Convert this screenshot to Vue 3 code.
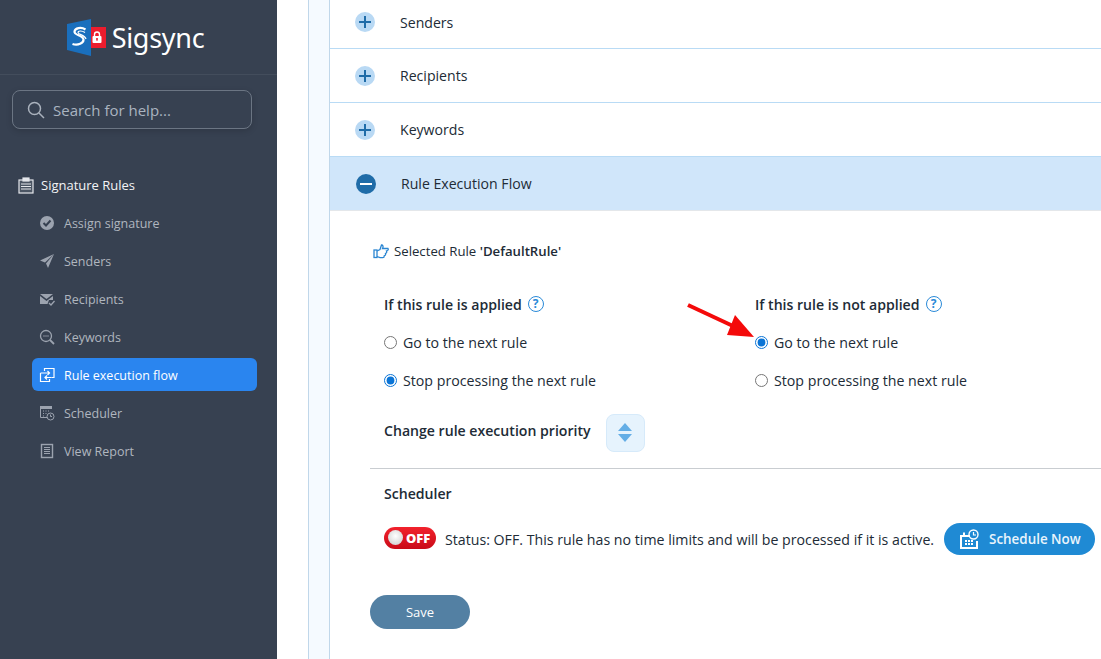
<script setup>
const menu = [
  { label: 'Assign signature', icon: 'check' },
  { label: 'Senders', icon: 'send' },
  { label: 'Recipients', icon: 'mail' },
  { label: 'Keywords', icon: 'search' },
  { label: 'Rule execution flow', icon: 'flow', active: true },
  { label: 'Scheduler', icon: 'sched' },
  { label: 'View Report', icon: 'report' }
];
const sections = ['Senders', 'Recipients', 'Keywords'];
</script>

<template>
  <div class="page">
    <aside class="sidebar">
      <div class="brand">
        <svg class="logo" width="40" height="37" viewBox="0 0 40 37">
          <rect x="24" y="8" width="15" height="21" fill="#ec1c2d" />
          <path d="M0 5 L24 0 V37 L0 31 Z" fill="#1a6fbd" />
          <path d="M18.5 10.5 C14 7.5 8 9 7.5 12.5 C7 16.5 16 16 16.5 20.5 C16.8 24 11 27 5.5 25" fill="none" stroke="#fff" stroke-width="2.2" />
          <path d="M18 13.5 C15 11.5 11 11.5 11 13.5 C11 15.5 18 16 19 20" fill="none" stroke="#fff" stroke-width="1.2" />
          <rect x="25.5" y="17" width="9" height="7" rx="1" fill="#fff" />
          <path d="M27.5 17 V15.5 A2.5 2.5 0 0 1 32.5 15.5 V17" fill="none" stroke="#fff" stroke-width="1.4" />
          <rect x="29.2" y="19" width="1.6" height="2.6" fill="#ec1c2d" />
        </svg>
        <span class="brand-name">Sigsync</span>
      </div>

      <div class="search">
        <svg width="18" height="18" viewBox="0 0 18 18" fill="none" stroke="#aab2bd" stroke-width="1.5">
          <circle cx="7.5" cy="7.5" r="6" />
          <path d="M12 12 L17 17" />
        </svg>
        <span>Search for help...</span>
      </div>

      <div class="nav-head">
        <svg width="16" height="17" viewBox="0 0 16 17" fill="none" stroke="#e5e7eb" stroke-width="1.2">
          <rect x="1" y="3" width="14" height="13" fill="#4b5563" />
          <rect x="5" y="1" width="6" height="3" fill="#e5e7eb" />
          <path d="M3 7 H13 M3 9.5 H13 M3 12 H13" />
        </svg>
        <span>Signature Rules</span>
      </div>

      <nav class="nav">
        <div v-for="item in menu" :key="item.label" class="nav-item" :class="{ active: item.active }">
          <svg class="nav-icon" width="16" height="16" viewBox="0 0 16 16">
            <g v-if="item.icon === 'check'">
              <circle cx="8" cy="8" r="7" fill="#9ca3af" />
              <path d="M4.5 8 L7 10.5 L11.5 5.5" fill="none" stroke="#374151" stroke-width="2" />
            </g>
            <path v-else-if="item.icon === 'send'" d="M15 1 L1 7.5 L6 9.5 Z M15 1 L7 10.5 L9 15 Z" fill="#9ca3af" />
            <g v-else-if="item.icon === 'mail'">
              <path d="M1 3 H14 L7.5 8 Z" fill="#9ca3af" />
              <path d="M1 5 L7.5 10 L14 5 V9 H10 L8.5 13 H1 Z" fill="#9ca3af" />
              <path d="M10 12 L12 14 L15.5 10" fill="none" stroke="#9ca3af" stroke-width="1.3" />
            </g>
            <g v-else-if="item.icon === 'search'" fill="none" stroke="#9ca3af" stroke-width="1.3">
              <circle cx="7" cy="7" r="5.5" />
              <path d="M11 11 L15 15" stroke-width="1.8" />
              <path d="M4.5 7 H5.5 M6.5 7 H7.5 M8.5 7 H9.5" />
            </g>
            <g v-else-if="item.icon === 'flow'" fill="none" stroke="#fff" stroke-width="1.2">
              <path d="M5.5 4 V1.5 H15 V10.5 H12.5" />
              <path d="M1.5 6 H4 M1.5 6 V14.5 H10.5 V12" />
              <path d="M4 6 H10.5 M8.5 4 L10.5 6 L8.5 8" />
              <path d="M12.5 10.5 H6 M8 8.5 L6 10.5 L8 12.5" />
            </g>
            <g v-else-if="item.icon === 'sched'">
              <rect x="1" y="1" width="12" height="3" fill="#9ca3af" />
              <path d="M1.5 3 V12.5 H8" fill="none" stroke="#9ca3af" />
              <path d="M4 6 H5 M6.5 6 H7.5 M9 6 H10 M4 8.5 H5 M6.5 8.5 H7.5 M4 11 H5" stroke="#9ca3af" />
              <circle cx="11.5" cy="11.5" r="3.5" fill="#374151" stroke="#9ca3af" />
              <path d="M11.5 9.5 V11.5 H13" fill="none" stroke="#9ca3af" />
            </g>
            <g v-else fill="none" stroke="#9ca3af">
              <rect x="2.5" y="1.5" width="11" height="13" stroke-width="1.4" />
              <path d="M5 4.5 H11 M5 6.5 H11 M5 8.5 H11 M5 10.5 H11" />
            </g>
          </svg>
          <span>{{ item.label }}</span>
        </div>
      </nav>
    </aside>

    <div class="gutter"></div>

    <main class="content">
      <div v-for="(s, i) in sections" :key="s" class="acc-row" :class="{ first: i === 0 }">
        <span class="plus"></span>
        <span class="acc-label">{{ s }}</span>
      </div>
      <div class="acc-row open">
        <span class="minus"></span>
        <span class="acc-label">Rule Execution Flow</span>
      </div>

      <div class="panel">
        <div class="selected">
          <svg width="16" height="15" viewBox="0 0 16 15" fill="none" stroke="#2b86d2" stroke-width="1.3">
            <rect x="1" y="6" width="3" height="7.5" />
            <path d="M4 7 L7 5.5 L8.5 1 C10 1 10.5 2.5 9.5 4.5 H15 C15.6 5.5 15 6.8 13.5 7 C14 8.2 13.5 9.2 12.5 9.5 C12.8 10.7 12.3 11.5 11.3 11.7 C11.3 13 10.8 13.7 9.8 13.7 H7 L4 12.5" />
          </svg>
          <span>Selected Rule <b>'DefaultRule'</b></span>
        </div>

        <div class="rule-cols">
          <div class="rule-col">
            <div class="rule-title">
              If this rule is applied
              <span class="help">?</span>
            </div>
            <label class="radio"><input type="radio" name="applied" /> Go to the next rule</label>
            <label class="radio"><input type="radio" name="applied" checked /> Stop processing the next rule</label>
          </div>
          <div class="rule-col">
            <div class="rule-title">
              If this rule is not applied
              <span class="help">?</span>
            </div>
            <label class="radio"><input type="radio" name="notapplied" checked /> Go to the next rule</label>
            <label class="radio"><input type="radio" name="notapplied" /> Stop processing the next rule</label>
          </div>
        </div>

        <div class="priority">
          <span class="rule-title flat">Change rule execution priority</span>
          <span class="sort-btn">
            <svg width="14" height="20" viewBox="0 0 14 20" fill="#64aee6">
              <path d="M7 0 L14 8 H0 Z" />
              <path d="M0 11 H14 L7 19 Z" />
            </svg>
          </span>
        </div>

        <div class="divider"></div>

        <div class="rule-title sched-title">Scheduler</div>
        <div class="status-row">
          <span class="toggle"><i></i>OFF</span>
          <span class="status-text">Status: OFF. This rule has no time limits and will be processed if it is active.</span>
          <button class="schedule-btn">
            <svg width="20" height="21" viewBox="0 0 20 21">
              <path d="M1 6 H11 V8 H3 V18 H17 V12 H19 V20 H1 Z" fill="#fff" />
              <rect x="4" y="3.5" width="2" height="4" fill="#fff" />
              <path d="M6 11 H8 V13 H6 Z M9 11 H11 V13 H9 Z M12 11 H14 V13 H12 Z M6 14 H8 V16 H6 Z M9 14 H11 V16 H9 Z M12 14 H14 V16 H12 Z" fill="#fff" />
              <circle cx="14.5" cy="5.5" r="4.5" fill="none" stroke="#fff" stroke-width="1.4" />
              <path d="M14.5 3 V6 H17" fill="none" stroke="#fff" stroke-width="1.2" />
            </svg>
            Schedule Now
          </button>
        </div>

        <button class="save-btn">Save</button>
      </div>

      <svg class="arrow" width="72" height="44" viewBox="0 0 72 44">
        <path d="M1 2 L46 23" stroke="#f40a0a" stroke-width="4" fill="none" />
        <path d="M67 34 L40 32 L48 12 Z" fill="#f40a0a" />
      </svg>
    </main>
  </div>
</template>

<style scoped>
.page {
  display: flex;
  width: 1101px;
  height: 659px;
  overflow: hidden;
  background: #fff;
  font-family: "Open Sans", "Noto Sans", "Liberation Sans", sans-serif;
  color: #212b36;
}

.sidebar {
  width: 277px;
  flex-shrink: 0;
  background: #374151;
}

.brand {
  height: 75px;
  border-bottom: 1px solid #434d5c;
  display: flex;
  align-items: center;
  justify-content: center;
  gap: 5px;
  padding-right: 6px;
  box-sizing: border-box;
}

.brand-name {
  font-size: 27px;
  color: #fff;
  letter-spacing: -0.3px;
  font-family: "Noto Sans", sans-serif;
}

.search {
  margin: 15px 25px 0 12px;
  height: 37px;
  border: 1px solid #6b7583;
  border-radius: 8px;
  display: flex;
  align-items: center;
  gap: 8px;
  padding-left: 14px;
  box-shadow: 0 2px 6px rgba(0, 0, 0, 0.15);
  color: #aab4c0;
  font-size: 15px;
}

.nav-head {
  margin: 46px 0 0 18px;
  display: flex;
  align-items: center;
  gap: 7px;
  color: #f3f4f6;
  font-size: 13px;
  height: 20px;
}

.nav {
  margin: 11px 20px 0 32px;
  display: flex;
  flex-direction: column;
  gap: 5px;
}

.nav-item {
  height: 33px;
  box-sizing: border-box;
  padding-top: 1px;
  border-radius: 6px;
  display: flex;
  align-items: center;
  gap: 9px;
  padding-left: 7px;
  font-size: 12.5px;
  color: #b0b6bf;
}

.nav-item.active {
  background: #2a85ef;
  color: #fff;
}

.nav-icon {
  flex-shrink: 0;
  overflow: visible;
}

.gutter {
  width: 20px;
  margin-left: 31px;
  flex-shrink: 0;
  background: #f5faff;
  border-left: 1px solid #c0d7ea;
  border-right: 1px solid #c0d7ea;
}

.content {
  flex: 1;
  min-width: 0;
  position: relative;
}

.acc-row {
  height: 53px;
  border-bottom: 1px solid #b9dbf5;
  display: flex;
  align-items: center;
  font-size: 14.1px;
  padding-left: 25px;
}

.acc-row.first {
  padding-bottom: 4px;
  box-sizing: content-box;
  height: 44px;
}

.acc-row.open {
  height: 53px;
  background: #d0e6fa;
  border-bottom: 1px solid #e4e7ea;
  padding-left: 26px;
}

.acc-label {
  margin-left: 25px;
}

.plus,
.minus {
  width: 20px;
  height: 20px;
  border-radius: 50%;
  flex-shrink: 0;
  position: relative;
  background: #b9d9f4;
}

.minus {
  background: #1f6ca8;
}

.plus::before,
.plus::after,
.minus::before {
  content: "";
  position: absolute;
  left: 4px;
  top: 9px;
  width: 12px;
  height: 2px;
  background: #1f6ca8;
}

.plus::after {
  transform: rotate(90deg);
}

.minus::before {
  background: #fff;
}

.panel {
  padding: 32px 0 0 40px;
}

.selected {
  display: flex;
  align-items: center;
  gap: 5px;
  margin-left: 3px;
  font-size: 13.2px;
  height: 16px;
}

.selected b {
  font-weight: 600;
}

.rule-cols {
  display: flex;
  margin: 35px 0 0 14px;
}

.rule-col {
  width: 371px;
  flex-shrink: 0;
}

.rule-title {
  font-size: 14.1px;
  font-weight: 600;
  height: 20px;
  display: flex;
  align-items: center;
  gap: 6px;
}

.rule-title.flat {
  display: block;
  margin-bottom: 4px;
  white-space: nowrap;
}

.help {
  width: 16px;
  height: 16px;
  box-sizing: border-box;
  border: 1.5px solid #2a8ad8;
  border-radius: 50%;
  color: #2a8ad8;
  font-size: 12px;
  font-weight: 700;
  line-height: 13px;
  text-align: center;
}

.radio {
  display: flex;
  align-items: center;
  gap: 6px;
  margin-top: 18px;
  height: 20px;
  font-size: 14.2px;
}

.radio input {
  width: 13px;
  height: 13px;
  margin: 0;
  accent-color: #0a74d6;
}

.priority {
  margin: 24px 0 0 14px;
  display: flex;
  align-items: center;
  gap: 15px;
}

.sort-btn {
  width: 39px;
  height: 38px;
  background: #e6f3fd;
  border: 1px solid #d6eafa;
  border-radius: 8px;
  box-sizing: border-box;
  display: flex;
  align-items: center;
  justify-content: center;
}

.divider {
  height: 1px;
  background: #c9cdd1;
  margin-top: 16px;
}

.sched-title {
  margin: 14px 0 0 14px;
}

.status-row {
  margin: 20px 0 0 14px;
  display: flex;
  align-items: center;
  height: 32px;
  white-space: nowrap;
}

.toggle {
  width: 52px;
  height: 22px;
  flex-shrink: 0;
  border-radius: 11px;
  background: linear-gradient(#f2222c, #c90a18);
  color: #fff;
  font-size: 13px;
  font-weight: 800;
  display: flex;
  align-items: center;
  gap: 3px;
  padding-left: 4px;
  box-sizing: border-box;
  margin-top: -3px;
}

.toggle i {
  width: 15px;
  height: 15px;
  border-radius: 50%;
  background: radial-gradient(circle at 50% 40%, #fff, #c9c9c9);
}

.status-text {
  margin-left: 9px;
  font-size: 14.18px;
}

.schedule-btn {
  margin-left: 10px;
  width: 151px;
  height: 32px;
  flex-shrink: 0;
  border: none;
  border-radius: 16px;
  background: #1f8ad4;
  color: #e9f4fc;
  font: 600 13.4px "Open Sans", sans-serif;
  display: flex;
  align-items: center;
  gap: 10px;
  padding-left: 15px;
}

.save-btn {
  display: block;
  margin-top: 40px;
  width: 100px;
  height: 34px;
  border: none;
  border-radius: 17px;
  background: #5380a3;
  color: #fff;
  font: 13px "Open Sans", sans-serif;
}

.arrow {
  position: absolute;
  left: 357px;
  top: 303px;
}
</style>

<style>
html,
body {
  margin: 0;
}
</style>
